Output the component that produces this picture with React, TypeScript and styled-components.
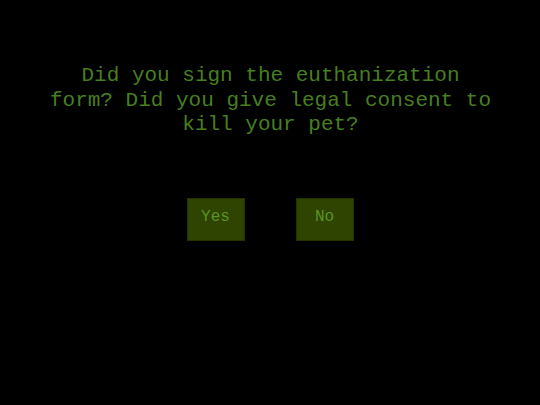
import React from 'react'
import styled, { createGlobalStyle } from 'styled-components'

const Global = createGlobalStyle`
  html, body {
    margin: 0;
    background: #000;
  }
`

const App: React.FC = () => {
  return (
    <Screen>
      <Global />
      <Question>
        Did you sign the euthanization form? Did you give legal consent to kill your pet?
      </Question>
      <Choices>
        <Choice>Yes</Choice>
        <Choice>No</Choice>
      </Choices>
    </Screen>
  )
}

export default App

const Screen = styled.div`
  width: 540px;
  height: 405px;
  background: #000;
  display: flex;
  flex-direction: column;
  align-items: center;
  padding-top: 64px;
  box-sizing: border-box;
  font-family: "Liberation Mono", "Courier New", monospace;
`

const Question = styled.div`
  width: 446px;
  margin-left: 1px;
  text-align: center;
  font-size: 21px;
  line-height: 24.5px;
  color: #467f20;
`

const Choices = styled.div`
  display: flex;
  gap: 51px;
  margin-top: 60px;
`

const Choice = styled.div`
  width: 58px;
  height: 43px;
  background: #2e4400;
  border: 1px solid #223300;
  color: #5a9420;
  font-size: 16px;
  display: flex;
  justify-content: center;
  padding-top: 9px;
  box-sizing: border-box;
`
